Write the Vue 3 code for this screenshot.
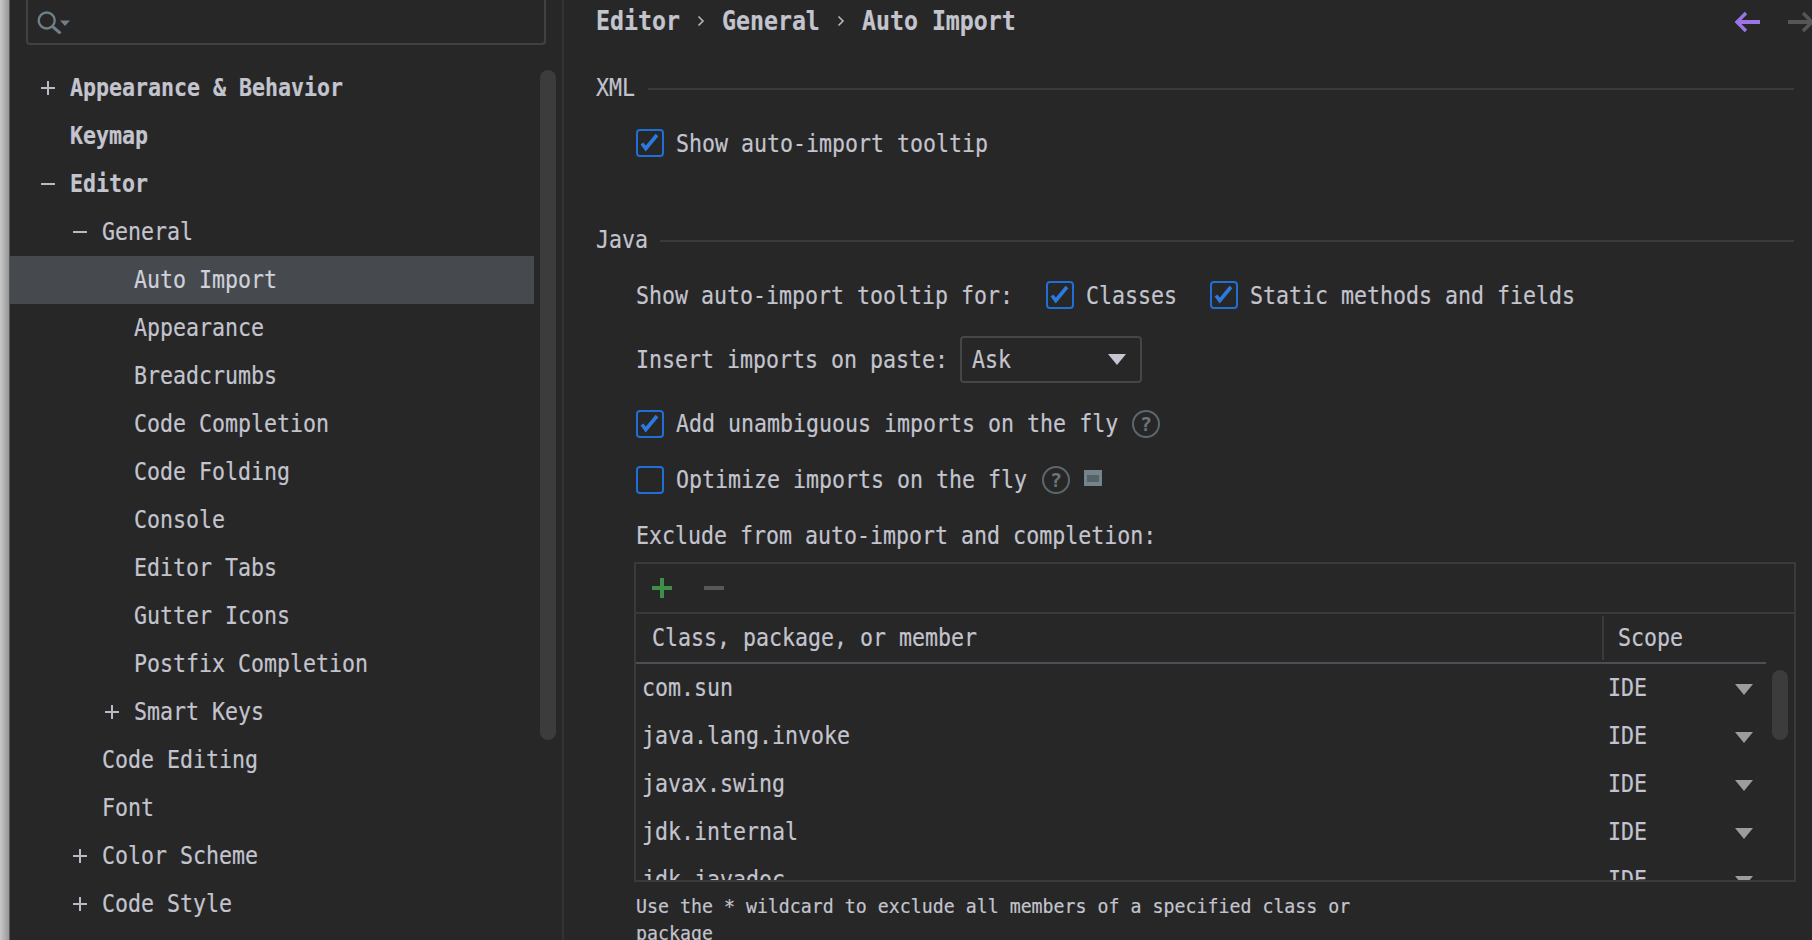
<script setup>
const w = (s, a = 13) => ({ width: s.length * a + 'px' })
const tree = [
  { t: 'Appearance & Behavior', d: 0, i: '+', b: true },
  { t: 'Keymap', d: 0, b: true },
  { t: 'Editor', d: 0, i: '-', b: true },
  { t: 'General', d: 1, i: '-' },
  { t: 'Auto Import', d: 2, sel: true },
  { t: 'Appearance', d: 2 },
  { t: 'Breadcrumbs', d: 2 },
  { t: 'Code Completion', d: 2 },
  { t: 'Code Folding', d: 2 },
  { t: 'Console', d: 2 },
  { t: 'Editor Tabs', d: 2 },
  { t: 'Gutter Icons', d: 2 },
  { t: 'Postfix Completion', d: 2 },
  { t: 'Smart Keys', d: 2, i: '+' },
  { t: 'Code Editing', d: 1 },
  { t: 'Font', d: 1 },
  { t: 'Color Scheme', d: 1, i: '+' },
  { t: 'Code Style', d: 1, i: '+' }
]
const rows = ['com.sun', 'java.lang.invoke', 'javax.swing', 'jdk.internal', 'jdk.javadoc']
</script>

<template>
  <div class="app">
    <div class="strip"></div>
    <aside class="side">
      <div class="search">
        <svg width="34" height="28" viewBox="0 0 34 28" fill="none">
          <circle cx="9.7" cy="14.5" r="8" stroke="#6f7e87" stroke-width="2.4" />
          <path d="M15.5 20.5l8 7" stroke="#6f7e87" stroke-width="3" />
          <path d="M23 14.5h10l-5 5.5z" fill="#6f7e87" />
        </svg>
      </div>
      <div class="tree">
        <div v-for="n in tree" :key="n.t" class="node" :class="{ sel: n.sel, bold: n.b }" :style="{ paddingLeft: 28 + n.d * 32 + 'px' }">
          <svg class="tw" width="32" height="16" viewBox="0 0 32 16">
            <path v-if="n.i === '+'" d="M3 8h14M10 1v14" stroke="#b9bac3" stroke-width="2" />
            <path v-if="n.i === '-'" d="M3 8h14" stroke="#b9bac3" stroke-width="2" />
          </svg>
          <span class="t" :style="w(n.t)">{{ n.t }}</span>
        </div>
      </div>
      <div class="thumb"></div>
    </aside>

    <main class="main">
      <div class="crumb bold flat">
        <span class="t" :style="w('Editor', 14)">Editor</span>
        <span class="sep"><svg width="8" height="14" viewBox="0 0 8 14" fill="none"><path d="M1.5 2.5L6 7l-4.5 4.5" stroke="#b5b6c0" stroke-width="1.6" /></svg></span>
        <span class="t" :style="w('General', 14)">General</span>
        <span class="sep"><svg width="8" height="14" viewBox="0 0 8 14" fill="none"><path d="M1.5 2.5L6 7l-4.5 4.5" stroke="#b5b6c0" stroke-width="1.6" /></svg></span>
        <span class="t" :style="w('Auto Import', 14)">Auto Import</span>
        <svg class="back" width="28" height="22" viewBox="0 0 28 22" fill="none">
          <path d="M3 11h23" stroke="#9b75e3" stroke-width="4" />
          <path d="M12 2l-9 9 9 9" stroke="#9b75e3" stroke-width="3.4" />
        </svg>
        <svg class="fwd" width="28" height="22" viewBox="0 0 28 22" fill="none">
          <path d="M0 11h24" stroke="#565656" stroke-width="4" />
          <path d="M15 2l9 9-9 9" stroke="#565656" stroke-width="3.4" />
        </svg>
      </div>

      <div class="section first">
        <span class="t" :style="w('XML')">XML</span>
        <div class="rule xml"></div>
      </div>
      <div class="row m8">
        <span class="cb on"><svg width="24" height="24" viewBox="0 0 24 24" fill="none"><path d="M4 12.5L7.8 17.5 19 4" stroke="#2a7be0" stroke-width="3.6" /></svg></span>
        <span class="t" :style="w('Show auto-import tooltip')">Show auto-import tooltip</span>
      </div>

      <div class="section java">
        <span class="t" :style="w('Java')">Java</span>
        <div class="rule jv"></div>
      </div>
      <div class="row m8">
        <span class="t lab-for" :style="w('Show auto-import tooltip for:')">Show auto-import tooltip for:</span>
        <span class="cb on"><svg width="24" height="24" viewBox="0 0 24 24" fill="none"><path d="M4 12.5L7.8 17.5 19 4" stroke="#2a7be0" stroke-width="3.6" /></svg></span>
        <span class="t" :style="w('Classes')">Classes</span>
        <span class="cb on static"><svg width="24" height="24" viewBox="0 0 24 24" fill="none"><path d="M4 12.5L7.8 17.5 19 4" stroke="#2a7be0" stroke-width="3.6" /></svg></span>
        <span class="t" :style="w('Static methods and fields')">Static methods and fields</span>
      </div>
      <div class="row insert">
        <span class="t lab-ins" :style="w('Insert imports on paste:')">Insert imports on paste:</span>
        <div class="combo">
          <span class="t" :style="w('Ask')">Ask</span>
          <svg width="18" height="11" viewBox="0 0 18 11"><path d="M0 0h18l-9 11z" fill="#c5c6cf" /></svg>
        </div>
      </div>
      <div class="row add flat">
        <span class="cb on"><svg width="24" height="24" viewBox="0 0 24 24" fill="none"><path d="M4 12.5L7.8 17.5 19 4" stroke="#2a7be0" stroke-width="3.6" /></svg></span>
        <span class="t" :style="w('Add unambiguous imports on the fly')">Add unambiguous imports on the fly</span>
        <span class="help">?</span>
      </div>
      <div class="row m8 flat">
        <span class="cb"></span>
        <span class="t" :style="w('Optimize imports on the fly')">Optimize imports on the fly</span>
        <span class="help">?</span>
        <svg class="mini" width="18" height="16" viewBox="0 0 18 16"><path d="M0 0h18v16H0z" fill="#75838a" /><path d="M3 5h12v7H3z" fill="#56626a" /></svg>
      </div>
      <div class="row exclude">
        <span class="t" :style="w('Exclude from auto-import and completion:')">Exclude from auto-import and completion:</span>
      </div>

      <div class="table">
        <div class="toolbar">
          <svg width="20" height="20" viewBox="0 0 20 20"><path d="M0 10h20M10 0v20" stroke="#3f8f4a" stroke-width="4" /></svg>
          <svg class="minus" width="20" height="20" viewBox="0 0 20 20"><path d="M0 10h20" stroke="#585858" stroke-width="4" /></svg>
        </div>
        <div class="head flat">
          <div class="h1"><span class="t" :style="w('Class, package, or member')">Class, package, or member</span></div>
          <div class="hdiv"></div>
          <div class="h2"><span class="t" :style="w('Scope')">Scope</span></div>
        </div>
        <div class="body">
          <div v-for="r in rows" :key="r" class="trow">
            <span class="name"><span class="t" :style="w(r)">{{ r }}</span></span>
            <span class="t" :style="w('IDE')">IDE</span>
            <svg class="arr" width="18" height="11" viewBox="0 0 18 11"><path d="M0 0h18l-9 11z" fill="#9a9c9f" /></svg>
          </div>
        </div>
        <div class="thumb2"></div>
      </div>
      <div class="note">Use the * wildcard to exclude all members of a specified class or package</div>
    </main>
  </div>
</template>

<style>
html, body { margin: 0; background: #272727; overflow: hidden; }
</style>

<style scoped>
.app {
  display: flex;
  width: 1812px;
  height: 940px;
  overflow: hidden;
  background: #272727;
  color: #c3c4ce;
  font-family: "DejaVu Sans Mono", "Liberation Mono", monospace;
  font-size: 24px;
}
.t {
  display: inline-block;
  flex: none;
  white-space: pre;
  line-height: 30px;
  -webkit-text-stroke: 0.2px currentColor;
  transform: scaleX(0.9);
  transform-origin: left center;
}
.main .t { transform: translateY(1px) scaleX(0.9); }
.main .flat .t { transform: scaleX(0.9); }
.bold { font-weight: 700; }
.strip {
  width: 10px;
  flex: none;
  background: linear-gradient(90deg, #c8c8c8, #9a9a9a 85%, #3a3a3a);
}
.side {
  position: relative;
  width: 552px;
  flex: none;
  border-right: 2px solid #333;
}
.search {
  display: flex;
  align-items: center;
  box-sizing: border-box;
  height: 45px;
  margin: 0 16px 19px 16px;
  padding: 0 0 4px 9px;
  border: 2px solid #414141;
  border-top: none;
  border-radius: 0 0 4px 4px;
}
.tree { width: 524px; }
.node {
  display: flex;
  align-items: center;
  height: 48px;
  box-sizing: border-box;
}
.node.sel { background: #464a4f; color: #d0d1da; }
.tw { flex: none; }
.thumb {
  position: absolute;
  left: 530px;
  top: 70px;
  width: 16px;
  height: 670px;
  border-radius: 8px;
  background: #3c3c3c;
}
.main {
  flex: 1;
  min-width: 0;
  box-sizing: border-box;
  padding: 0 18px 0 32px;
}
.crumb {
  position: relative;
  display: flex;
  align-items: center;
  height: 42px;
  font-size: 25.8px;
}
.sep {
  display: flex;
  align-items: center;
  justify-content: center;
  width: 42px;
  flex: none;
}
.back { position: absolute; right: 32px; top: 11px; }
.fwd { position: absolute; right: -22px; top: 11px; }
.section {
  display: flex;
  align-items: center;
  height: 48px;
}
.section.first { margin-top: 21px; }
.section.java { margin-top: 48px; }
.rule {
  flex: 1;
  height: 2px;
  margin-top: 4px;
  background: #3a3a3a;
}
.rule.xml { margin-left: 13px; }
.rule.jv { margin-left: 12px; }
.row {
  display: flex;
  align-items: center;
  height: 48px;
  padding-left: 40px;
}
.m8 { margin-top: 8px; }
.insert { margin-top: 16px; }
.add { margin-top: 17px; }
.exclude { margin-top: 7px; }
.cb {
  display: flex;
  align-items: center;
  justify-content: center;
  box-sizing: border-box;
  width: 28px;
  height: 28px;
  flex: none;
  margin-right: 12px;
  border: 2px solid #1f6fd6;
  border-radius: 4px;
}
.lab-for { margin-right: 33px; }
.static { margin-left: 33px; }
.lab-ins { margin-right: 12px; }
.combo {
  display: flex;
  align-items: center;
  justify-content: space-between;
  box-sizing: border-box;
  width: 182px;
  height: 47px;
  padding: 0 14px 0 10px;
  border: 2px solid #464646;
  border-radius: 4px;
}
.help {
  display: flex;
  align-items: center;
  justify-content: center;
  box-sizing: border-box;
  width: 28px;
  height: 28px;
  flex: none;
  margin-left: 15px;
  border: 2px solid #5c676c;
  border-radius: 50%;
  color: #69757a;
  font-size: 20px;
  font-weight: 700;
}
.add .help { margin-left: 14px; }
.mini { margin: -4px 0 0 14px; }
.table {
  position: relative;
  display: flex;
  flex-direction: column;
  box-sizing: border-box;
  width: 1162px;
  height: 320px;
  margin: 3px 0 0 38px;
  border: 2px solid #3a3a3a;
  overflow: hidden;
}
.toolbar {
  display: flex;
  align-items: center;
  box-sizing: border-box;
  height: 50px;
  flex: none;
  padding-left: 16px;
  border-bottom: 2px solid #3a3a3a;
}
.minus { margin-left: 32px; }
.head {
  display: flex;
  align-items: center;
  box-sizing: border-box;
  width: 1130px;
  height: 50px;
  flex: none;
  border-bottom: 2px solid #4a5055;
}
.h1 { width: 966px; padding-left: 16px; box-sizing: border-box; }
.hdiv { width: 2px; height: 44px; background: #3a3a3a; }
.h2 { padding-left: 14px; }
.body { flex: 1; min-height: 0; overflow: hidden; margin-top: -1px; width: 1130px; }
.trow {
  display: flex;
  align-items: center;
  height: 48px;
  padding: 0 13px 0 6px;
}
.name { width: 966px; flex: none; display: block; }
.arr { margin: 4px 0 0 auto; flex: none; }
.thumb2 {
  position: absolute;
  left: 1136px;
  top: 106px;
  width: 16px;
  height: 70px;
  border-radius: 8px;
  background: #3c3c3c;
}
.note {
  width: 880px;
  margin: 11px 0 0 40px;
  font-size: 20.3px;
  line-height: 27px;
  -webkit-text-stroke: 0.2px currentColor;
  transform: scaleX(0.9);
  transform-origin: left top;
}
</style>
